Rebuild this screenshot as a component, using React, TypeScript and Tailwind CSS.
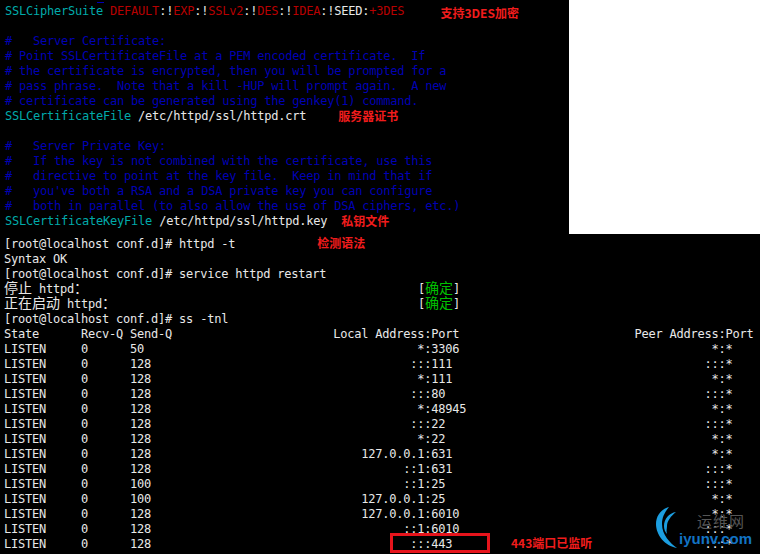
const mono = "font-['DejaVu_Sans_Mono','Noto_Sans_CJK_SC',monospace]";

// ss -tnl output: addresses are right aligned up to the colon
function row(send: string, addr: string, port: string, peer: string) {
  const head = ("LISTEN".padEnd(11) + "0".padEnd(7) + send).padEnd(60 - addr.length) + addr + ":" + port;
  return head.padEnd(102 - peer.length) + peer + ":*";
}

const rows = [
  row("50", "*", "3306", "*"),
  row("128", "::", "111", "::"),
  row("128", "*", "111", "*"),
  row("128", "::", "80", "::"),
  row("128", "*", "48945", "*"),
  row("128", "::", "22", "::"),
  row("128", "*", "22", "*"),
  row("128", "127.0.0.1", "631", "*"),
  row("128", "::1", "631", "::"),
  row("100", "::1", "25", "::"),
  row("100", "127.0.0.1", "25", "*"),
  row("128", "127.0.0.1", "6010", "*"),
  row("128", "::1", "6010", "::"),
];

function Line({ children, className = "" }: { children?: React.ReactNode; className?: string }) {
  return <div className={`h-[15px] whitespace-pre leading-[15px] ${className}`}>{children}</div>;
}

function Note({ children, className = "" }: { children: React.ReactNode; className?: string }) {
  return (
    <span className={`font-['Noto_Sans_CJK_SC',sans-serif] text-[12px] font-bold leading-[0] tracking-normal text-[#f01c1c] ${className}`}>
      {children}
    </span>
  );
}

function Cjk({ children, className = "" }: { children: React.ReactNode; className?: string }) {
  return <span className={`font-['Noto_Sans_CJK_SC',sans-serif] text-[14px] leading-[0] tracking-normal ${className}`}>{children}</span>;
}

function Comment({ text }: { text: string }) {
  return <Line className="text-[#0000b4]">{text}</Line>;
}

function Directive({ name, value }: { name: string; value: string }) {
  return (
    <>
      <span className="text-[#00aaaa]">{name}</span>
      <span className="text-[#e8e8e8]"> {value}</span>
    </>
  );
}

function StartLine({ children }: { children: React.ReactNode }) {
  return (
    <Line className="flex">
      <span className="w-[414px]">{children}</span>
      <span>
        [<Cjk className="text-[#00c000]">确定</Cjk>]
      </span>
    </Line>
  );
}

function Logo() {
  return (
    <div className="absolute left-[656px] top-[506px] h-[48px] w-[104px]">
      <svg width="34" height="44" viewBox="0 0 34 44" className="absolute left-0 top-0">
        <path d="M13 1C5 3 0 10 0 18c0 11 9 22 21 24-7-5-15-13-15-24C6 11 9 6 13 1z" fill="#1c9ee0" />
        <path d="M20 6c-7 1-12 7-12 14 0 3 1 6 3 8-1-3 0-6 0-8 0-5 4-10 9-14z" fill="#1c9ee0" />
      </svg>
      <span className="absolute left-[41px] top-[6px] font-['Noto_Sans_CJK_SC',sans-serif] text-[15px] leading-[18px] tracking-[1px] text-[#555555]">
        运维网
      </span>
      <span className="absolute left-[23px] top-[24px] font-['Liberation_Sans',sans-serif] text-[15px] font-bold leading-[18px] tracking-normal text-[#1273c4]">
        iyunv.com
      </span>
    </div>
  );
}

export default function App() {
  return (
    <div className={`relative h-[554px] w-[760px] overflow-hidden bg-black text-[12px] tracking-[-0.22px] text-[#e8e8e8] ${mono}`}>
      <span className="absolute left-[97px] top-[2px] h-px w-[7px] bg-[#0000b4]" />
      <div className="flex h-[237px]">
        <div className="w-[569px] pl-[5px] pt-[4px]">
          <Line>
            <span className="text-[#00aaaa]">SSLCipherSuite</span>{" "}
            <span className="text-[#b80000]">DEFAULT</span>:!
            <span className="text-[#b80000]">EXP</span>:!
            <span className="text-[#b80000]">SSLv2</span>:!
            <span className="text-[#b80000]">DES</span>:!
            <span className="text-[#b80000]">IDEA</span>:!SEED:
            <span className="text-[#b80000]">+3DES</span>
            <Note className="relative top-[3px] ml-[36px]">支持3DES加密</Note>
          </Line>
          <Line />
          <Comment text="#   Server Certificate:" />
          <Comment text="# Point SSLCertificateFile at a PEM encoded certificate.  If" />
          <Comment text="# the certificate is encrypted, then you will be prompted for a" />
          <Comment text="# pass phrase.  Note that a kill -HUP will prompt again.  A new" />
          <Comment text="# certificate can be generated using the genkey(1) command." />
          <Line>
            <Directive name="SSLCertificateFile" value="/etc/httpd/ssl/httpd.crt" />
            <Note className="relative top-[1px] ml-[32px]">服务器证书</Note>
          </Line>
          <Line />
          <Comment text="#   Server Private Key:" />
          <Comment text="#   If the key is not combined with the certificate, use this" />
          <Comment text="#   directive to point at the key file.  Keep in mind that if" />
          <Comment text="#   you've both a RSA and a DSA private key you can configure" />
          <Comment text="#   both in parallel (to also allow the use of DSA ciphers, etc.)" />
          <Line>
            <Directive name="SSLCertificateKeyFile" value="/etc/httpd/ssl/httpd.key" />
            <Note className="relative top-[1px] ml-[14px]">私钥文件</Note>
          </Line>
        </div>
        <div className="h-[234px] w-[191px] bg-white" />
      </div>

      <div className="pl-[4px]">
        <Line>
          [root@localhost conf.d]# httpd -t
          <Note className="ml-[82px]">检测语法</Note>
        </Line>
        <Line>Syntax OK</Line>
        <Line>[root@localhost conf.d]# service httpd restart</Line>
        <StartLine>
          <Cjk>停止</Cjk> httpd<Cjk>：</Cjk>
        </StartLine>
        <StartLine>
          <Cjk>正在启动</Cjk> httpd<Cjk>：</Cjk>
        </StartLine>
        <Line>[root@localhost conf.d]# ss -tnl</Line>
        <Line>{"State      Recv-Q Send-Q".padEnd(47) + "Local Address:Port".padEnd(43) + "Peer Address:Port"}</Line>
        {rows.map((r, i) => (
          <Line key={i}>{r}</Line>
        ))}
        <Line className="relative">
          {row("128", "::", "443", "::")}
          <span className="absolute left-[386px] top-[-4px] h-[20px] w-[100px] border-[3px] border-[#e6141c]" />
          <Note className="absolute left-[507px] top-[6px]">443端口已监听</Note>
        </Line>
      </div>

      <Logo />
    </div>
  );
}
